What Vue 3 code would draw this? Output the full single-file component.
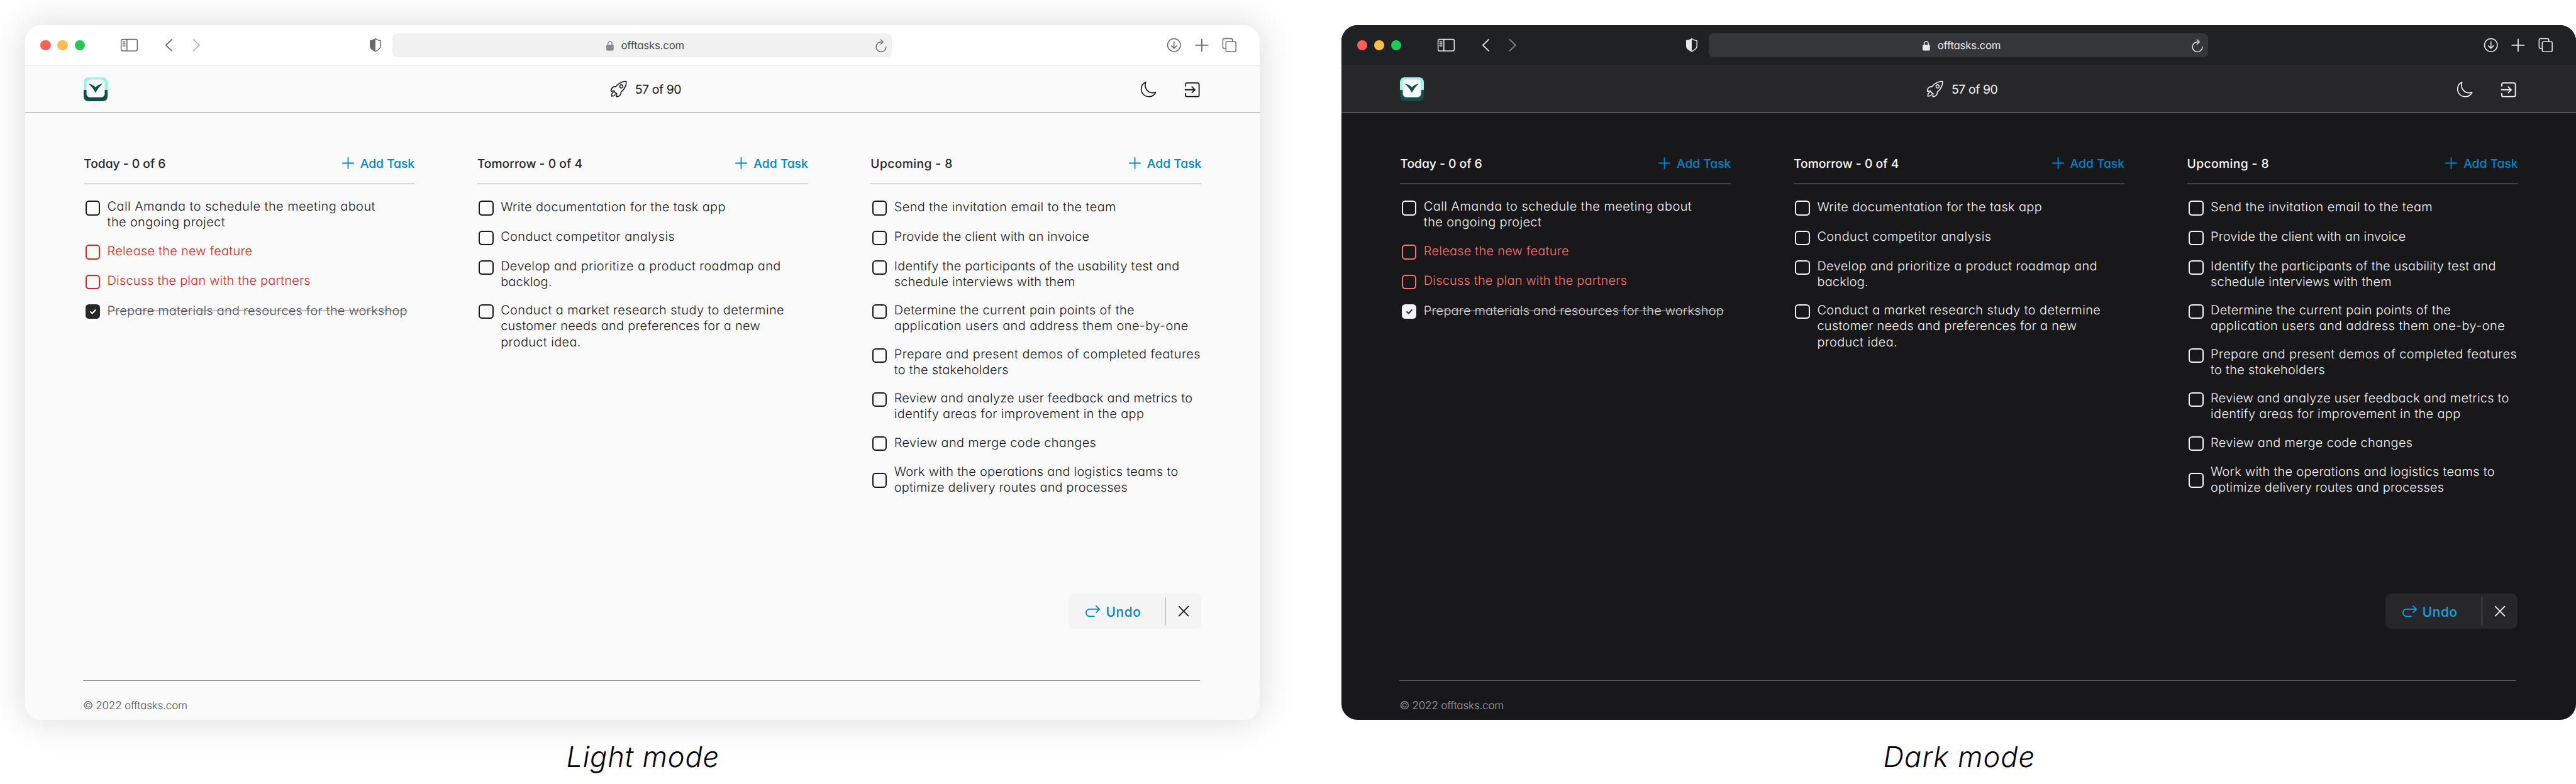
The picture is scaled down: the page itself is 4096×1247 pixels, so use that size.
<script setup>
const themes = [
  { id: 'light', caption: 'Light mode', captionWidth: 269 },
  { id: 'dark', caption: 'Dark mode', captionWidth: 267 },
]

// Each line is [text, width]; widths are in design pixels.
const columns = [
  {
    title: 'Today - 0 of 6',
    width: 144,
    tasks: [
      { lines: [['Call Amanda to schedule the meeting about', 471], ['the ongoing project', 207]] },
      { state: 'overdue', lines: [['Release the new feature', 255]] },
      { state: 'overdue', lines: [['Discuss the plan with the partners', 357]] },
      { state: 'done', lines: [['Prepare materials and resources for the workshop', 527]] },
    ],
  },
  {
    title: 'Tomorrow - 0 of 4',
    width: 185,
    tasks: [
      { lines: [['Write documentation for the task app', 395]] },
      { lines: [['Conduct competitor analysis', 306]] },
      { lines: [['Develop and prioritize a product roadmap and', 492], ['backlog.', 90]] },
      {
        lines: [
          ['Conduct a market research study to determine', 498],
          ['customer needs and preferences for a new', 456],
          ['product idea.', 141],
        ],
      },
    ],
  },
  {
    title: 'Upcoming - 8',
    width: 144,
    tasks: [
      { lines: [['Send the invitation email to the team', 390]] },
      { lines: [['Provide the client with an invoice', 343]] },
      { lines: [['Identify the participants of the usability test and', 501], ['schedule interviews with them', 318]] },
      { lines: [['Determine the current pain points of the', 422], ['application users and address them one-by-one', 517]] },
      { lines: [['Prepare and present demos of completed features', 538], ['to the stakeholders', 201]] },
      { lines: [['Review and analyze user feedback and metrics to', 524], ['identify areas for improvement in the app', 439]] },
      { lines: [['Review and merge code changes', 355]] },
      { state: 'centered', lines: [['Work with the operations and logistics teams to', 499], ['optimize delivery routes and processes', 410]] },
    ],
  },
]

// Tracks a text run so that it spans the given design width.
const vFit = {
  mounted(el, { value }) {
    const unit = parseFloat(getComputedStyle(document.documentElement).fontSize) / 100
    const natural = el.getBoundingClientRect().width
    el.style.letterSpacing = (value * unit - natural) / el.textContent.length + 'px'
  },
}
</script>

<template>
  <main class="board">
    <section v-for="t in themes" :key="t.id" class="mode" :class="t.id">
      <div class="window">
        <div class="toolbar">
          <span class="lights"><i class="red"></i><i class="amber"></i><i class="green"></i></span>
          <svg class="i-side" viewBox="0 0 32 24">
            <rect x="1.8" y="1.8" width="28.4" height="20.4" rx="2.5" />
            <path d="M12 2v20M4.8 6.2h4M4.8 9.7h4M4.8 13.2h4" />
          </svg>
          <svg class="i-back" viewBox="0 0 14 24"><path d="M12.3 2 2 12l10.3 10" /></svg>
          <svg class="i-fwd" viewBox="0 0 14 24"><path d="M1.7 2 12 12 1.7 22" /></svg>
          <svg class="i-shield" viewBox="0 0 22 26">
            <path d="M11 1.8C8.5 3.9 5.5 4.8 1.9 5.2V15c0 4.2 4.1 6.8 9.1 9.2 5-2.4 9.1-5 9.1-9.2V5.2C16.5 4.8 13.5 3.9 11 1.8z" />
            <path class="solid" d="M11 1.8C8.5 3.9 5.5 4.8 1.9 5.2V15c0 4.2 4.1 6.8 9.1 9.2z" />
          </svg>
          <div class="address">
            <svg class="i-lock" viewBox="0 0 13 17">
              <rect class="solid" x="0" y="7" width="13" height="10" rx="1.8" />
              <path d="M2.9 7.5V4.8a3.6 3.8 0 0 1 7.2 0v2.7" />
            </svg>
            <span v-fit="111" class="url">offtasks.com</span>
            <svg class="i-reload" viewBox="0 0 20 24">
              <path d="M10.8 5.2A8.7 8.7 0 1 0 18.7 13.5M9.2 1.2l4.3 4-4.3 4" />
            </svg>
          </div>
          <svg class="i-down" viewBox="0 0 26 26">
            <circle cx="13" cy="13" r="11.3" />
            <path d="M13 7v11.5M8.5 14.2l4.5 4.4 4.5-4.4" />
          </svg>
          <svg class="i-new" viewBox="0 0 22 22"><path d="M11 .5v21M.5 11h21" /></svg>
          <svg class="i-tabs" viewBox="0 0 26 26">
            <path d="M6.8 18.8H4a2.5 2.5 0 0 1-2.5-2.5V4A2.5 2.5 0 0 1 4 1.5h12A2.5 2.5 0 0 1 18.5 4v2.5" />
            <rect x="7" y="6.8" width="17.5" height="17.7" rx="2.5" />
          </svg>
        </div>

        <header class="appbar">
          <svg class="logo" viewBox="0 0 42 42">
            <path class="mint" d="M0 22V8a8 8 0 0 1 8-8h26a8 8 0 0 1 8 8v14z" />
            <path class="teal" d="M0 22h42v12a8 8 0 0 1-8 8H8a8 8 0 0 1-8-8z" />
            <rect class="paper" x="5" y="4" width="32" height="31" rx="6" />
            <path class="teal" d="M8.2 11.2c5.3.6 9.7 2.6 12.8 6.3 3.1-3.7 7.5-5.700 12.3-6.3-4.8 3.5-8.5 8.5-12.3 16-3.8-7.5-8-12.5-12.8-16z" />
          </svg>
          <svg class="i-rocket" viewBox="40 40 432 432">
            <path d="M461.81 53.81a4.4 4.4 0 0 0-3.3-3.39c-54.38-13.3-180 34.09-248.13 102.17a294.9 294.9 0 0 0-33.09 39.08c-21-1.9-42-.3-59.88 7.5-50.49 22.2-65.18 80.18-69.28 105.07a9 9 0 0 0 9.8 10.4l81.07-8.9a180.29 180.29 0 0 0 1.1 18.3 18.15 18.15 0 0 0 5.3 11.09l31.39 31.39a18.15 18.15 0 0 0 11.1 5.3 179.91 179.91 0 0 0 18.19 1.1l-8.89 81a9 9 0 0 0 10.39 9.79c24.9-4 83-18.69 105.07-69.17 7.8-17.9 9.4-38.79 7.6-59.69a293.91 293.91 0 0 0 39.19-33.09c68.38-68 115.47-190.86 102.37-247.95zM298.66 213.67a42.7 42.7 0 1 1 60.38 0 42.65 42.65 0 0 1-60.38 0z" />
            <path d="M109.64 352a45.06 45.06 0 0 0-26.35 12.84C65.67 382.52 64 448 64 448s65.52-1.67 83.15-19.31A44.73 44.73 0 0 0 160 402.32" />
          </svg>
          <span v-fit="81" class="count">57 of 90</span>
          <svg class="i-moon" viewBox="36 36 440 440">
            <path d="M160 136c0-30.62 4.51-61.61 16-88C99.57 81.27 48 159.32 48 248c0 119.29 96.71 216 216 216 88.68 0 166.73-51.57 200-128-26.39 11.49-57.38 16-88 16-119.29 0-216-96.71-216-216z" />
          </svg>
          <svg class="i-exit" viewBox="0 0 26 26">
            <path d="M1 6.5V3.5A2.5 2.5 0 0 1 3.5 1h19A2.5 2.5 0 0 1 25 3.5v19a2.5 2.5 0 0 1-2.5 2.5h-19A2.5 2.5 0 0 1 1 22.5v-3M.5 13H17.5M12.5 7.8l5.2 5.2-5.2 5.2" />
          </svg>
        </header>

        <div class="columns">
          <section v-for="c in columns" :key="c.title" class="column">
            <div class="column-head">
              <h2 v-fit="c.width">{{ c.title }}</h2>
              <button class="add">
                <svg class="i-plus" viewBox="0 0 21 21"><path d="M10.5 1v19M1 10.5h19" /></svg>
                <span v-fit="95.5">Add Task</span>
              </button>
            </div>
            <ul>
              <li v-for="task in c.tasks" :key="task.lines[0][0]" :class="[task.state, { multi: task.lines.length > 1 }]">
                <span class="check">
                  <svg v-if="task.state === 'done'" viewBox="0 0 26 26"><path d="M9 13.3l3 2.8 5.3-6" /></svg>
                </span>
                <p>
                  <span v-for="line in task.lines" :key="line[0]" class="line">
                    <span v-fit="line[1]" class="run">{{ line[0] }}</span>
                  </span>
                </p>
              </li>
            </ul>
          </section>
        </div>

        <div class="toast">
          <button class="undo">
            <svg class="i-undo" viewBox="0 0 26 21">
              <path d="M15.3 19.2H7.3a6.3 6.3 0 0 1 0-12.6H24.5M18.7 1l5.9 5.7-5.9 5.5" />
            </svg>
            <span v-fit="62">Undo</span>
          </button>
          <i class="divider"></i>
          <svg class="i-close" viewBox="0 0 18 18"><path d="M.8.8l16.4 16.4M17.2.8.8 17.2" /></svg>
        </div>

        <footer><span v-fit="183">© 2022 offtasks.com</span></footer>
      </div>
      <p class="caption"><span v-fit="t.captionWidth">{{ t.caption }}</span></p>
    </section>
  </main>
</template>

<style>
/* 1rem is 100 design pixels on a 4524px wide board. */
html {
  font-size: calc(100vw / 45.24);
}
body {
  margin: 0;
  background: #fff;
  overflow: hidden;
}
</style>

<style scoped>
.board {
  display: flex;
  gap: 1.44rem;
  box-sizing: border-box;
  width: 45.24rem;
  height: 13.77rem;
  padding: 0.44rem 0 0 0.44rem;
  overflow: hidden;
  font-family: Inter, 'Open Sans', sans-serif;
  font-feature-settings: 'cv11';
  text-rendering: geometricPrecision;
}
.mode {
  flex: none;
  width: 21.68rem;
}
.light {
  --bar: #fff;
  --bar-line: #e6e6e6;
  --chrome: #6b6b6b;
  --chrome-dim: #b5b5b5;
  --field: #f1f1f1;
  --lock: #88888a;
  --url: #4c4c4c;
  --head: #fafafa;
  --head-line: #7f7f83;
  --page: #fafafa;
  --rule: #9d9da1;
  --foot-rule: #8c8c90;
  --ink: #18181b;
  --title: #27272a;
  --muted: #52525b;
  --danger: #dc2626;
  --link: #0284c7;
  --undo: #0284c7;
  --toast: #f4f4f4;
  --toast-line: #b4b4b6;
  --fill: #27272a;
  --tick: #fff;
  --shadow: 0 0 0.64rem rgba(0, 0, 0, 0.16);
}
.dark {
  --bar: #202124;
  --bar-line: #313134;
  --chrome: #e8e8e8;
  --chrome-dim: #8a8a8c;
  --field: #35363a;
  --lock: #e8e8e8;
  --url: #e8e8e8;
  --head: #272729;
  --head-line: #8f8f91;
  --page: #18181a;
  --rule: #8a8a8c;
  --foot-rule: #5f5f62;
  --ink: #f4f4f5;
  --title: #fafafa;
  --muted: #d4d4d8;
  --danger: #f87171;
  --link: #0284c7;
  --undo: #0ea5e9;
  --toast: #272729;
  --toast-line: #77777a;
  --fill: #f4f4f5;
  --tick: #27272a;
  --shadow: none;
}
.window {
  display: flex;
  flex-direction: column;
  height: 12.21rem;
  border-radius: 0.28rem;
  overflow: hidden;
  background: var(--page);
  box-shadow: var(--shadow);
}
svg {
  display: block;
  flex: none;
  fill: none;
  stroke: var(--ink);
  stroke-linecap: round;
  stroke-linejoin: round;
  overflow: visible;
}
span {
  white-space: nowrap;
}

/* browser toolbar */
.toolbar {
  display: flex;
  align-items: center;
  box-sizing: border-box;
  flex: none;
  height: 0.72rem;
  padding-left: 0.27rem;
  border-bottom: 1px solid var(--bar-line);
  background: var(--bar);
}
.toolbar svg {
  stroke: var(--chrome);
  stroke-width: 1.7;
}
.toolbar .solid {
  fill: var(--chrome);
  stroke: none;
}
.lights {
  display: flex;
  gap: 0.12rem;
}
.lights i {
  width: 0.18rem;
  height: 0.18rem;
  border-radius: 50%;
}
.red { background: #ff5f5b; }
.amber { background: #ffbc4f; }
.green { background: #22c955; }
.i-side { width: 0.32rem; margin-left: 0.625rem; }
.i-back { width: 0.14rem; margin-left: 0.464rem; }
.i-fwd { width: 0.14rem; margin-left: 0.336rem; }
.toolbar .i-back, .toolbar .i-fwd { stroke-width: 2; }
.toolbar .i-fwd { stroke: var(--chrome-dim); }
.i-shield { width: 0.22rem; margin-left: 2.97rem; }
.address {
  display: flex;
  align-items: center;
  box-sizing: border-box;
  width: 8.77rem;
  height: 0.42rem;
  margin-left: 0.188rem;
  padding-left: 3.75rem;
  border-radius: 0.08rem;
  background: var(--field);
}
.i-lock { width: 0.13rem; margin-top: 0.02rem; }
.toolbar .i-lock { stroke: var(--lock); }
.toolbar .i-lock .solid { fill: var(--lock); }
.url {
  margin: 0.04rem 0 0 0.135rem;
  font-size: 0.185rem;
  line-height: 0.24rem;
  color: var(--url);
}
.i-reload { width: 0.2rem; margin: 0.02rem 0 0 3.353rem; }
.toolbar .i-reload { stroke-width: 1.6; }
.i-down { width: 0.26rem; margin-left: 4.83rem; }
.i-new { width: 0.22rem; margin-left: 0.245rem; }
.i-tabs { width: 0.26rem; margin-left: 0.24rem; }
.toolbar .i-new { stroke-width: 2; }

/* app bar */
.appbar {
  display: flex;
  align-items: center;
  box-sizing: border-box;
  flex: none;
  height: 0.83rem;
  padding-left: 1.03rem;
  border-bottom: 1px solid var(--head-line);
  background: var(--head);
}
.appbar svg { stroke-width: 2; }
.logo { width: 0.42rem; stroke: none; }
.mint { fill: #99f6e4; stroke: none; }
.teal { fill: #134e4a; stroke: none; }
.paper { fill: #fafafa; stroke: none; }
.i-rocket { width: 0.28rem; margin-left: 8.83rem; }
.appbar .i-rocket { stroke-width: 27; }
.count {
  margin: 0.015rem 0 0 0.153rem;
  font-size: 0.215rem;
  line-height: 0.3rem;
  color: var(--ink);
}
.i-moon { width: 0.27rem; margin-left: 8.072rem; }
.appbar .i-moon { stroke-width: 30; }
.i-exit { width: 0.26rem; margin: 0.005rem 0 0 0.5rem; }

/* task columns */
.columns {
  display: flex;
  gap: 1.1rem;
  flex: none;
  box-sizing: border-box;
  height: 8.437rem;
  padding: 0.734rem 0 0 1.03rem;
}
.column { width: 5.81rem; }
.column-head {
  display: flex;
  justify-content: space-between;
  box-sizing: border-box;
  height: 0.516rem;
  border-bottom: 1px solid var(--rule);
  line-height: 0.3rem;
}
h2 {
  height: 0.3rem;
  margin: 0;
  font-size: 0.213rem;
  font-weight: 500;
  white-space: nowrap;
  color: var(--title);
}
button {
  display: flex;
  align-items: flex-start;
  padding: 0;
  border: 0;
  background: none;
  font: inherit;
  font-feature-settings: inherit;
  color: var(--link);
}
.add {
  height: 0.3rem;
  gap: 0.108rem;
  font-size: 0.213rem;
  font-weight: 500;
}
.i-plus {
  width: 0.21rem;
  margin-top: 0.042rem;
  stroke: var(--link);
  stroke-width: 2;
}
ul {
  margin: 0;
  padding: 0.286rem 0 0 0.028rem;
  list-style: none;
}
li {
  display: flex;
  align-items: flex-start;
  gap: 0.126rem;
  height: 0.523rem;
  color: var(--ink);
}
.multi { height: 0.773rem; }
.overdue { color: var(--danger); }
.check {
  box-sizing: border-box;
  flex: none;
  width: 0.26rem;
  height: 0.26rem;
  border: 2px solid currentColor;
  border-radius: 0.06rem;
}
.done .check {
  border: 0;
  background: var(--fill);
}
.check svg {
  stroke: var(--tick);
  stroke-width: 2.4;
}
.centered .check { margin-top: 0.122rem; }
li p {
  margin: -0.023rem 0 0;
  font-size: 0.22rem;
  font-weight: 300;
  line-height: 0.281rem;
}
.multi p { margin-top: -0.036rem; }
.line { display: block; }
.done .run {
  color: var(--muted);
  text-decoration: line-through;
  text-decoration-thickness: 0.015rem;
}

/* undo toast */
.toast {
  display: flex;
  align-items: center;
  align-self: flex-end;
  flex: none;
  box-sizing: border-box;
  width: 2.322rem;
  height: 0.62rem;
  margin-right: 1.028rem;
  padding-left: 0.297rem;
  border-radius: 0.1rem;
  background: var(--toast);
}
.undo {
  align-items: center;
  gap: 0.095rem;
  width: 1.4rem;
  font-size: 0.23rem;
  font-weight: 500;
  line-height: 0.3rem;
  color: var(--undo);
}
.undo span { margin-top: 0.035rem; }
.i-undo { width: 0.26rem; stroke: var(--undo); stroke-width: 1.9; }
.divider {
  width: 1px;
  height: 0.49rem;
  background: var(--toast-line);
}
.i-close { width: 0.18rem; margin-left: 0.219rem; stroke-width: 2; }

footer {
  margin: 0.9rem 1.05rem 0 1.02rem;
  padding-top: 0.325rem;
  border-top: 1px solid var(--foot-rule);
  font-size: 0.19rem;
  font-weight: 300;
  line-height: 0.24rem;
  color: #52525b;
}
.dark footer { color: #a1a1aa; }

.caption {
  margin: 0.335rem 0 0 0.02rem;
  text-align: center;
  font-size: 0.5rem;
  font-weight: 300;
  font-style: italic;
  line-height: 0.62rem;
  color: #000;
}
</style>
